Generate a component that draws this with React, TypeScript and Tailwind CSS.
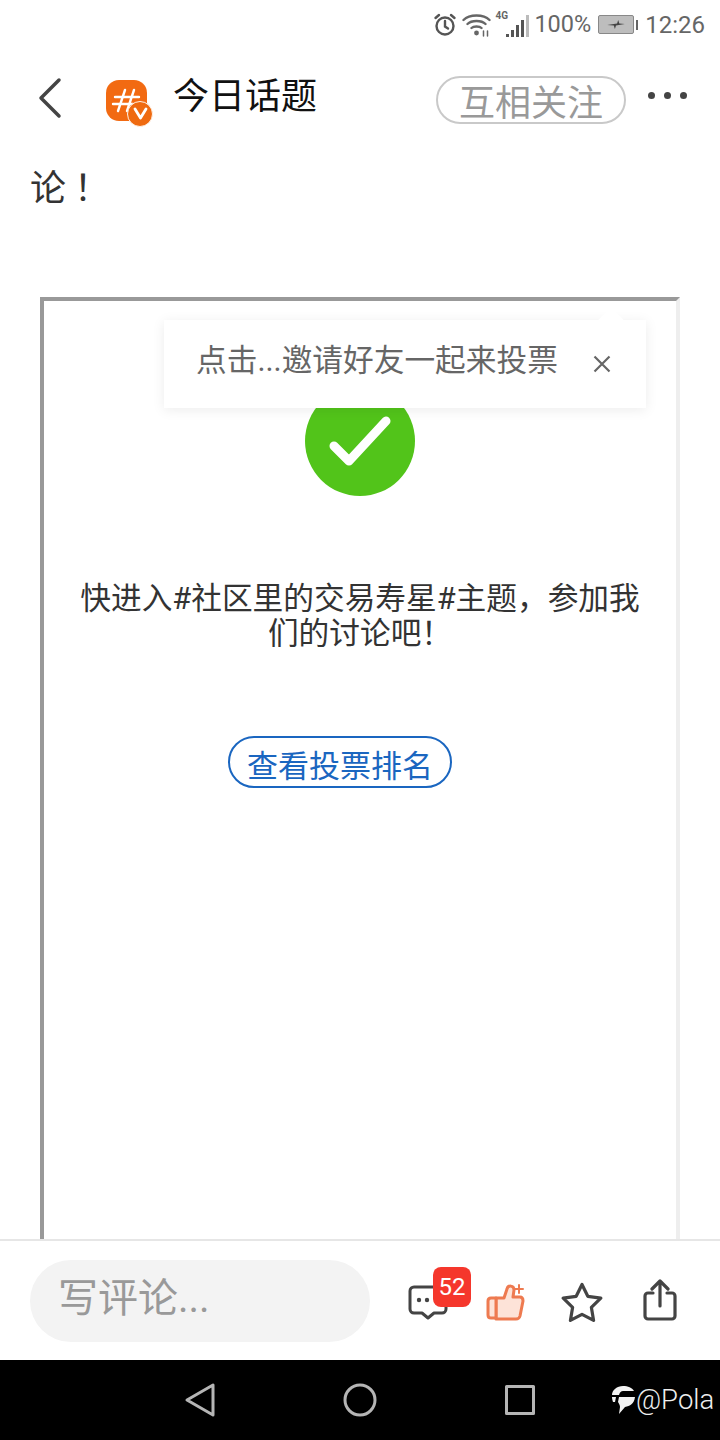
const cjk = "font-['Roboto','Noto_Sans_CJK_SC',sans-serif]";

function StatusBar() {
  return (
    <div className="flex h-[48px] items-center justify-end pr-[15px] pt-[1px] text-[24px] text-[#666]">
      <svg width="24" height="24" viewBox="0 0 24 24" fill="none" stroke="#555" strokeWidth="2.400" strokeLinecap="round">
        <circle cx="12" cy="13" r="8.500" />
        <path d="M12 8v5.500l3 2M2.500 5 6 2M21.500 5 18 2" />
      </svg>
      <svg className="ml-[5px]" width="29" height="24" viewBox="0 0 28 24" fill="none" stroke="#666" strokeWidth="2.400" strokeLinecap="round">
        <path d="M1 7c6-6 20-6 26 0M5 11c4-4 14-4 18 0M9 15c2-2 8-2 10 0" />
        <circle cx="14" cy="20" r="2.400" fill="#666" stroke="none" />
        <path d="M21 18v5M25 18v5" strokeWidth="1.500" />
      </svg>
      <div className="relative ml-[4px] flex h-[24px] w-[34px] items-end justify-end gap-[2px]">
        <span className="absolute left-[0px] top-[-3px] text-[10px] font-bold leading-[12px]">4G</span>
        <i className="h-[3px] w-[3px] bg-[#555]" />
        <i className="h-[7px] w-[3px] bg-[#555]" />
        <i className="h-[12px] w-[3px] bg-[#555]" />
        <i className="h-[17px] w-[3px] bg-[#555]" />
        <i className="h-[22px] w-[3px] bg-[#bbb]" />
      </div>
      <span className="ml-[5px] text-[23.500px] leading-none">100%</span>
      <div className="ml-[7px] flex items-center">
        <div className="flex h-[19px] w-[36px] items-center justify-center rounded-[2px] border border-[#888] bg-[#bdbdbd]">
          <svg width="20" height="11" viewBox="0 0 18 10">
            <path d="M1 5.500 10 4l1-3 1 3 5 .5-8 1.500-1 3-1-3z" fill="#444" />
          </svg>
        </div>
        <div className="ml-[2px] h-[10px] w-[2px] bg-[#666]" />
      </div>
      <span className="ml-[7px] leading-none">12:26</span>
    </div>
  );
}

function Header() {
  return (
    <div className="flex h-[96px] items-center">
      <svg className="ml-[37px] mt-[4px]" width="26" height="42" viewBox="0 0 26 42" fill="none" stroke="#444" strokeWidth="3.500" strokeLinecap="round" strokeLinejoin="round">
        <path d="M22 3 4 21l18 18" />
      </svg>
      <div className="relative ml-[43px] mt-[8px] flex h-[41px] w-[41px] items-center justify-center rounded-[13px] bg-[#f26a12]">
        <svg width="32" height="32" viewBox="0 0 32 32" fill="none" stroke="#fff" strokeWidth="2.400" strokeLinecap="round">
          <path d="M14 6 7 27M23 6l-7 21M4 13h24M2 20h20" />
        </svg>
        <div className="absolute bottom-[-6px] right-[-6px] flex h-[26px] w-[26px] items-center justify-center rounded-full border border-[#fff3e8] bg-[#ef6a10]">
          <svg width="15" height="13" viewBox="0 0 15 13" fill="none" stroke="#fff" strokeWidth="2.800" strokeLinecap="round" strokeLinejoin="round">
            <path d="m2 2 5.500 9L13 2" />
          </svg>
        </div>
      </div>
      <div className="ml-[26px] mt-[2px] text-[36px] leading-none text-[#111]">今日话题</div>
      <div className="ml-[119px] mt-[8px] flex h-[48px] w-[190px] items-center justify-center rounded-full border-2 border-[#c9c9c9] pt-[8px] text-[36px] leading-none text-[#999]">
        互相关注
      </div>
      <div className="ml-[22px] mt-[-2px] flex gap-[9px]">
        <i className="h-[7px] w-[7px] rounded-full bg-[#444]" />
        <i className="h-[7px] w-[7px] rounded-full bg-[#444]" />
        <i className="h-[7px] w-[7px] rounded-full bg-[#444]" />
      </div>
    </div>
  );
}

function Tooltip() {
  return (
    <div className="absolute left-[120px] top-[19px] flex h-[88px] w-[482px] items-center bg-white pb-[6px] pl-[32px] text-[30.700px] leading-none text-[#666] shadow-[0_2px_12px_rgba(0,0,0,0.08)]">
      <div className="absolute right-[26px] top-[-9px] h-[18px] w-[18px] rotate-45 bg-white" />
      <span className="relative">点击...邀请好友一起来投票</span>
      <svg className="relative ml-[35px] mt-[6px]" width="18" height="18" viewBox="0 0 18 18" fill="none" stroke="#666" strokeWidth="2.200">
        <path d="m1.500 1.500 15 15M16.500 1.500l-15 15" />
      </svg>
    </div>
  );
}

function VoteCard() {
  return (
    <div className="relative ml-[40px] mt-[82px] h-[942px] w-[640px] border-t-4 border-r-4 border-l-4 border-t-[#999] border-r-[#eee] border-l-[#999] bg-white">
      <Tooltip />
      <div className="mx-auto mt-[85px] flex h-[110px] w-[110px] items-center justify-center rounded-full bg-[#52c41a]">
        <svg width="62" height="52" viewBox="0 0 62 52" fill="none" stroke="#fff" strokeWidth="9" strokeLinecap="round" strokeLinejoin="round">
          <path d="m5 31 15 15L57 6" />
        </svg>
      </div>
      <p className="mx-auto mt-[85px] w-[566px] text-center text-[30.700px] leading-[35px] text-[#333]">
        {"快进入#社区里的交易寿星#主题\uFF0C参加我们的讨论吧\uFF01"}
      </p>
      <div className="ml-[184px] mt-[85px] flex h-[52px] w-[224px] items-center justify-center rounded-full border-2 border-[#1a66c0] pt-[8px] text-[31px] leading-none text-[#1a66c0]">
        查看投票排名
      </div>
    </div>
  );
}

function BottomBar() {
  return (
    <div className="flex h-[121px] items-center border-t-2 border-[#e6e6e6] bg-white">
      <div className="ml-[30px] flex h-[82px] w-[340px] items-center rounded-[41px] bg-[#f3f3f3] pb-[4px] pl-[28px] text-[40px] leading-none text-[#999]">
        写评论...
      </div>
      <div className="relative ml-[38px] mt-[4px]">
        <svg className="block" width="40" height="36" viewBox="0 0 40 36" fill="none" stroke="#444" strokeWidth="3" strokeLinejoin="round">
          <path d="M6 2h28a4 4 0 0 1 4 4v18a4 4 0 0 1-4 4h-8l-6 5-6-5H6a4 4 0 0 1-4-4V6a4 4 0 0 1 4-4z" />
          <circle cx="11" cy="15" r="2.200" fill="#444" stroke="none" />
          <circle cx="19" cy="15" r="2.200" fill="#444" stroke="none" />
        </svg>
        <div className="absolute left-[25px] top-[-18px] flex h-[40px] w-[38px] items-center justify-center rounded-[8px] bg-[#f5372c] text-[24px] leading-none text-white">
          52
        </div>
      </div>
      <svg className="ml-[38px] mt-[2px]" width="40" height="38" viewBox="0 0 40 38" fill="none" stroke="#ee7a50" strokeWidth="3" strokeLinejoin="round" strokeLinecap="round">
        <path d="M10 15h8l3-9c1-4 7-4 7 1l-1 7h7c2 0 3 2 3 4l-3 15c-.5 2-2 3-4 3H10z" fill="#fde3d8" />
        <path d="M10 15H5c-2 0-3 1-3 3v14c0 2 1 3 3 3h5z" fill="#fde3d8" />
        <path d="M33 2v8M29 6h8" strokeWidth="2" />
      </svg>
      <svg className="ml-[35px] mt-[2px]" width="42" height="40" viewBox="0 0 42 40" fill="none" stroke="#444" strokeWidth="3.200" strokeLinejoin="round">
        <path d="m21 2.500 5.800 11.800 13 1.900-9.400 9.200 2.200 13L21 32.300 9.400 38.400l2.200-13-9.400-9.200 13-1.900z" />
      </svg>
      <svg className="ml-[40px] mt-[-1px]" width="34" height="42" viewBox="0 0 34 42" fill="none" stroke="#444" strokeWidth="3.200" strokeLinecap="round" strokeLinejoin="round">
        <path d="M10 14H5a3 3 0 0 0-3 3v20a3 3 0 0 0 3 3h24a3 3 0 0 0 3-3V17a3 3 0 0 0-3-3h-5M17 27V3M9 10l8-8 8 8" />
      </svg>
    </div>
  );
}

function NavBar() {
  return (
    <div className="flex h-[80px] items-center bg-black">
      <svg className="ml-[184px]" width="32" height="36" viewBox="0 0 32 36" fill="none" stroke="#b5b5b5" strokeWidth="3" strokeLinejoin="round">
        <path d="M29 3v30L3 18z" />
      </svg>
      <svg className="ml-[127px]" width="34" height="34" viewBox="0 0 34 34" fill="none" stroke="#b5b5b5" strokeWidth="3">
        <circle cx="17" cy="17" r="15" />
      </svg>
      <svg className="ml-[128px]" width="30" height="30" viewBox="0 0 30 30" fill="none" stroke="#b5b5b5" strokeWidth="3" strokeLinejoin="round">
        <rect x="1.500" y="1.500" width="27" height="27" />
      </svg>
      <div className="ml-[76px] flex items-center">
        <svg width="25" height="30" viewBox="0 0 25 30">
          <path d="M12 1c5 0 9 1.500 11 5H12c-2 0-3 1-4 4H1c0-5 5-9 11-9zM8 12h16c-1 7-5 9-10 10l-6 7 1-7c0-2-1-3-2-5l1-5zM1 12h4l-1 5H2c-.5-2-1-3-1-5z" fill="#f2f2f2" />
        </svg>
        <span className="text-[27.500px] font-light leading-none text-[#eee]">@Pola</span>
      </div>
    </div>
  );
}

export default function App() {
  return (
    <div className={`flex h-[1440px] w-[720px] flex-col overflow-hidden bg-white ${cjk}`}>
      <StatusBar />
      <Header />
      <div className="ml-[30px] mt-[10px] h-[70px] text-[36px] leading-[70px] tracking-[8px] text-[#333]">{"论\uFF01"}</div>
      <div className="mt-[-9px]">
        <VoteCard />
      </div>
      <BottomBar />
      <NavBar />
    </div>
  );
}
